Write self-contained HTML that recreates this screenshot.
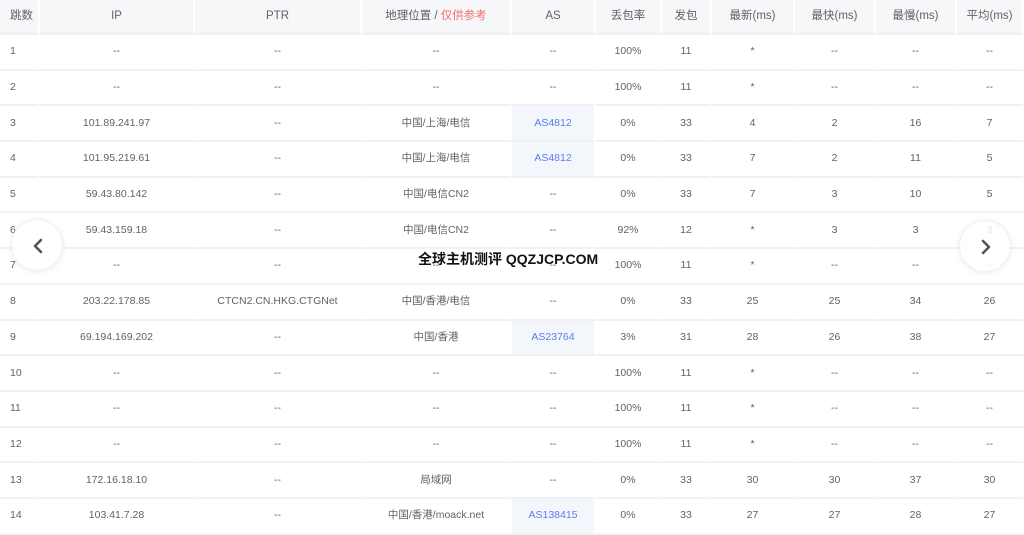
<!DOCTYPE html>
<html><head><meta charset="utf-8"><style>
*{margin:0;padding:0;box-sizing:border-box}
body{width:1024px;height:528px;overflow:hidden;background:#fff;font-family:"Liberation Sans","Noto Sans CJK SC",sans-serif;font-size:10.5px;color:#606266;position:relative}
table{border-collapse:separate;border-spacing:0;table-layout:fixed;width:1024px;position:absolute;left:0;top:0}
th{height:35px;background:#f6f7f9;font-weight:normal;color:#606266;border-right:2px solid #fff;font-size:11.5px;border-bottom:3px solid #f0f2f5;line-height:14px}
td{height:35.7px;text-align:center;border-bottom:2px solid #eef1f5;border-right:2px solid #fff;line-height:13px}
td:first-child,th:first-child{text-align:left;padding-left:10px}
.as{background:#f3f6fb;color:#5b7cf0}
.red{color:#f56c6c}
.btn{position:absolute;width:52px;height:52px;border-radius:50%;background:rgba(255,255,255,.85);box-shadow:0 1px 6px rgba(0,0,0,.08);border:1px solid #f0f0f0}
.btn svg{position:absolute;left:16px;top:16px}
.wm{position:absolute;left:418px;top:249px;font-weight:bold;font-size:14px;color:#111;font-family:"Liberation Sans","Noto Sans CJK SC",sans-serif}
</style></head><body>
<table>
<colgroup><col style="width:40px"><col style="width:155px"><col style="width:167px"><col style="width:150px"><col style="width:84px"><col style="width:66px"><col style="width:50px"><col style="width:83px"><col style="width:81px"><col style="width:81px"><col style="width:67px"></colgroup>
<tr><th>跳数</th><th>IP</th><th>PTR</th><th>地理位置 / <span class="red">仅供参考</span></th><th>AS</th><th>丢包率</th><th>发包</th><th>最新(ms)</th><th>最快(ms)</th><th>最慢(ms)</th><th>平均(ms)</th></tr>
<tr><td>1</td><td>--</td><td>--</td><td>--</td><td>--</td><td>100%</td><td>11</td><td>*</td><td>--</td><td>--</td><td>--</td></tr>
<tr><td>2</td><td>--</td><td>--</td><td>--</td><td>--</td><td>100%</td><td>11</td><td>*</td><td>--</td><td>--</td><td>--</td></tr>
<tr><td>3</td><td>101.89.241.97</td><td>--</td><td>中国/上海/电信</td><td class="as">AS4812</td><td>0%</td><td>33</td><td>4</td><td>2</td><td>16</td><td>7</td></tr>
<tr><td>4</td><td>101.95.219.61</td><td>--</td><td>中国/上海/电信</td><td class="as">AS4812</td><td>0%</td><td>33</td><td>7</td><td>2</td><td>11</td><td>5</td></tr>
<tr><td>5</td><td>59.43.80.142</td><td>--</td><td>中国/电信CN2</td><td>--</td><td>0%</td><td>33</td><td>7</td><td>3</td><td>10</td><td>5</td></tr>
<tr><td>6</td><td>59.43.159.18</td><td>--</td><td>中国/电信CN2</td><td>--</td><td>92%</td><td>12</td><td>*</td><td>3</td><td>3</td><td>3</td></tr>
<tr><td>7</td><td>--</td><td>--</td><td>--</td><td>--</td><td>100%</td><td>11</td><td>*</td><td>--</td><td>--</td><td>--</td></tr>
<tr><td>8</td><td>203.22.178.85</td><td>CTCN2.CN.HKG.CTGNet</td><td>中国/香港/电信</td><td>--</td><td>0%</td><td>33</td><td>25</td><td>25</td><td>34</td><td>26</td></tr>
<tr><td>9</td><td>69.194.169.202</td><td>--</td><td>中国/香港</td><td class="as">AS23764</td><td>3%</td><td>31</td><td>28</td><td>26</td><td>38</td><td>27</td></tr>
<tr><td>10</td><td>--</td><td>--</td><td>--</td><td>--</td><td>100%</td><td>11</td><td>*</td><td>--</td><td>--</td><td>--</td></tr>
<tr><td>11</td><td>--</td><td>--</td><td>--</td><td>--</td><td>100%</td><td>11</td><td>*</td><td>--</td><td>--</td><td>--</td></tr>
<tr><td>12</td><td>--</td><td>--</td><td>--</td><td>--</td><td>100%</td><td>11</td><td>*</td><td>--</td><td>--</td><td>--</td></tr>
<tr><td>13</td><td>172.16.18.10</td><td>--</td><td>局域网</td><td>--</td><td>0%</td><td>33</td><td>30</td><td>30</td><td>37</td><td>30</td></tr>
<tr><td>14</td><td>103.41.7.28</td><td>--</td><td>中国/香港/moack.net</td><td class="as">AS138415</td><td>0%</td><td>33</td><td>27</td><td>27</td><td>28</td><td>27</td></tr>
</table>
<div class="btn" style="left:11px;top:219px"><svg width="20" height="20" viewBox="0 0 20 20"><path d="M13 4 L7 10 L13 16" fill="none" stroke="#555" stroke-width="2.6" stroke-linecap="round" stroke-linejoin="round"/></svg></div>
<div class="btn" style="left:959px;top:220px"><svg width="20" height="20" viewBox="0 0 20 20"><path d="M7 4 L13 10 L7 16" fill="none" stroke="#555" stroke-width="2.6" stroke-linecap="round" stroke-linejoin="round"/></svg></div>
<div class="wm">全球主机测评 QQZJCP.COM</div>
</body></html>
